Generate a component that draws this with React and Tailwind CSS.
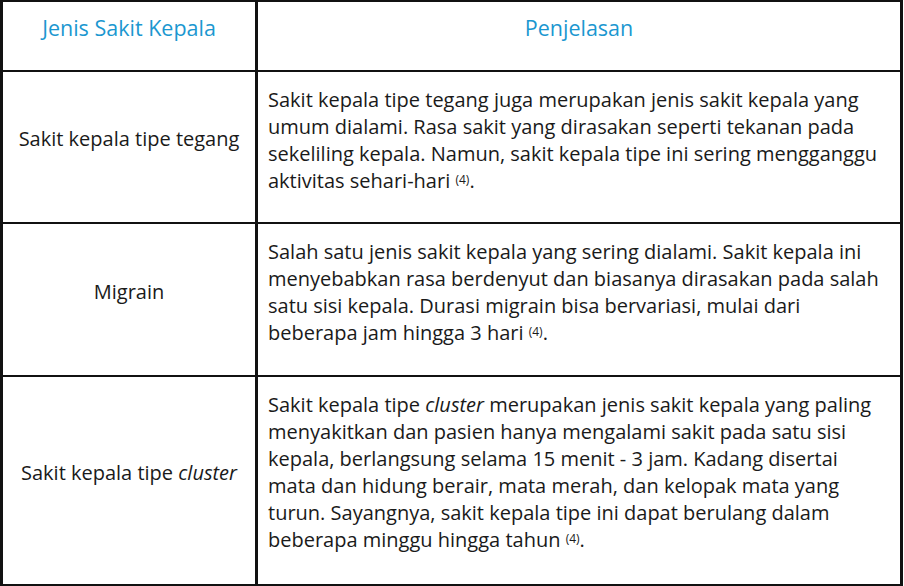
import React from 'react';

const rows = [
  {
    name: <span>Sakit kepala tipe tegang</span>,
    h: 'h-[152px]',
    lines: [
      'Sakit kepala tipe tegang juga merupakan jenis sakit kepala yang',
      'umum dialami. Rasa sakit yang dirasakan seperti tekanan pada',
      'sekeliling kepala. Namun, sakit kepala tipe ini sering mengganggu',
      'aktivitas sehari-hari',
    ],
  },
  {
    name: <span>Migrain</span>,
    h: 'h-[153px]',
    lines: [
      'Salah satu jenis sakit kepala yang sering dialami. Sakit kepala ini',
      'menyebabkan rasa berdenyut dan biasanya dirasakan pada salah',
      'satu sisi kepala. Durasi migrain bisa bervariasi, mulai dari',
      'beberapa jam hingga 3 hari',
    ],
  },
  {
    name: <span>Sakit kepala tipe <i>cluster</i></span>,
    h: 'h-[209px]',
    lines: [
      <>Sakit kepala tipe <i>cluster</i> merupakan jenis sakit kepala yang paling</>,
      'menyakitkan dan pasien hanya mengalami sakit pada satu sisi',
      'kepala, berlangsung selama 15 menit - 3 jam. Kadang disertai',
      'mata dan hidung berair, mata merah, dan kelopak mata yang',
      'turun. Sayangnya, sakit kepala tipe ini dapat berulang dalam',
      'beberapa minggu hingga tahun',
    ],
  },
];

export default function App() {
  return (
    <div className="w-[904px] h-[586px] bg-white text-[#1a1a1a] font-['Open_Sans','Noto_Sans',sans-serif] text-[20px]">
      <div className="w-[903px] border-l-[3px] border-r-[3px] border-t-2 border-b-2 border-[#111]">
        {/* header */}
        <div className="grid grid-cols-[255px_1fr] h-[68px]">
          <div className="border-r-[3px] border-[#111] text-center text-[#1b97d0] text-[21.5px] pt-[10px]">Jenis Sakit Kepala</div>
          <div className="text-center text-[#1b97d0] text-[21.5px] pt-[10px]">Penjelasan</div>
        </div>

        {rows.map((row, i) => (
          <div key={i} className={`grid grid-cols-[255px_1fr] border-t-2 border-[#111] ${row.h}`}>
            <div className="border-r-[3px] border-[#111] flex items-center justify-center pb-4 whitespace-nowrap">
              {row.name}
            </div>
            <div className="pl-[10px] pt-[14px] leading-[27px] whitespace-nowrap">
              {row.lines.map((l, j) => (
                <div key={j}>
                  {l}
                  {j === row.lines.length - 1 && (
                    <>
                      {' '}
                      <sup className="text-[12px] relative -top-[4px]">(4)</sup>.
                    </>
                  )}
                </div>
              ))}
            </div>
          </div>
        ))}
      </div>
    </div>
  );
}
